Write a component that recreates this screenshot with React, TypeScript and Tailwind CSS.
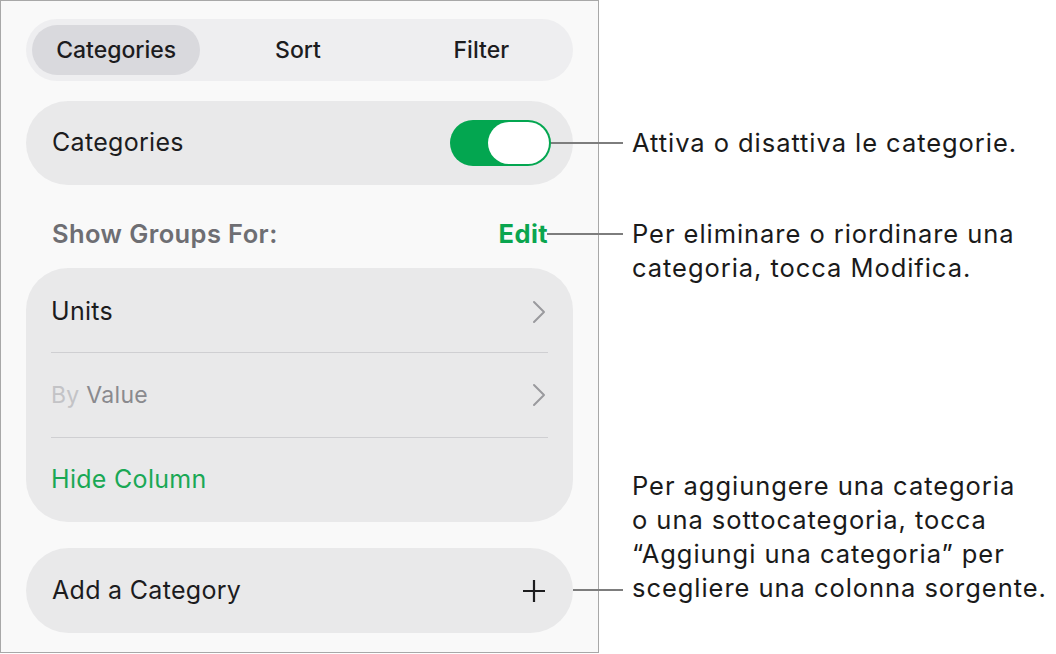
import React from "react";

const font = { fontFamily: "Inter, 'Noto Sans', sans-serif" };

function Chevron() {
  return (
    <svg width="14" height="24" viewBox="0 0 14 24" fill="none">
      <path d="M2 2 L12 12 L2 22" stroke="#9a9a9e" strokeWidth="2" strokeLinecap="round" strokeLinejoin="round" />
    </svg>
  );
}

function Plus() {
  return (
    <svg width="24" height="24" viewBox="0 0 24 24" fill="none">
      <path d="M12 1 V23 M1 12 H23" stroke="#1c1c1e" strokeWidth="2.2" />
    </svg>
  );
}

export default function App() {
  return (
    <div className="relative flex w-[1056px] h-[654px] bg-white text-[#1c1c1e]" style={font}>
      {/* Panel */}
      <div className="w-[599px] h-[653px] shrink-0 border border-[#a8a8a8] bg-[#f9f9f9] flex flex-col px-[25px] pt-[18px]">
        {/* Segmented */}
        <div className="h-[62px] rounded-full bg-[#eeeef0] flex items-center px-[6px]">
          <div className="w-[169px] h-[50px] rounded-full bg-[#d9d9dd] flex items-center justify-center text-[23px] font-medium">
            Categories
          </div>
          <div className="w-[196px] flex justify-center text-[23px] font-medium">Sort</div>
          <div className="w-[172px] flex justify-center text-[23px] font-medium">Filter</div>
        </div>

        {/* Categories toggle row */}
        <div className="mt-[20px] h-[84px] rounded-full bg-[#e9e9ea] flex items-center justify-between pl-[26px] pr-[22px] text-[25px] tracking-[0.3px]">
          <span>Categories</span>
          <div className="w-[101px] h-[46px] rounded-full bg-[#03a650] p-[2px] flex justify-end">
            <div className="w-[61px] h-[42px] rounded-full bg-white" />
          </div>
        </div>

        {/* Show groups for */}
        <div className="mt-[33px] h-[32px] flex items-center justify-between pl-[26px] pr-[25px] text-[25.5px] tracking-[0.4px]">
          <span className="font-semibold text-[#6e6e73]">Show Groups For:</span>
          <span className="font-bold text-[#0aa54f]">Edit</span>
        </div>

        {/* Group card */}
        <div className="mt-[18px] h-[254px] rounded-[42px] bg-[#e9e9ea] flex flex-col px-[25px] text-[25px] tracking-[0.3px]">
          <div className="h-[85px] flex items-center justify-between border-b border-[#cfcfd2] pt-[3px]">
            <span>Units</span>
            <span className="pr-[2px]"><Chevron /></span>
          </div>
          <div className="h-[85px] flex items-center justify-between border-b border-[#cfcfd2]">
            <span className="text-[23px]">
              <span className="text-[#c3c3c6]">By </span>
              <span className="text-[#8a8a8e]">Value</span>
            </span>
            <span className="pr-[2px]"><Chevron /></span>
          </div>
          <div className="flex-1 flex items-center">
            <span className="text-[#1aa855]">Hide Column</span>
          </div>
        </div>

        {/* Add a category */}
        <div className="mt-[26px] h-[85px] rounded-full bg-[#e9e9ea] flex items-center justify-between pl-[26px] pr-[27px] text-[25px] tracking-[0.3px]">
          <span>Add a Category</span>
          <Plus />
        </div>
      </div>

      {/* Annotations */}
      <div className="flex flex-col pl-[33px] text-[25.5px] tracking-[0.95px] leading-[34px] text-[#1a1a1a]">
        <p className="mt-[126px] whitespace-nowrap">Attiva o disattiva le categorie.</p>
        <p className="mt-[57px] whitespace-nowrap">
          Per eliminare o riordinare una
          <br />
          categoria, tocca Modifica.
        </p>
        <p className="mt-[184px] whitespace-nowrap">
          Per aggiungere una categoria
          <br />o una sottocategoria, tocca
          <br />“Aggiungi una categoria” per
          <br />scegliere una colonna sorgente.
        </p>
      </div>

      {/* Leader lines */}
      <div className="absolute left-[551px] top-[142px] w-[72px] h-[2px] bg-[#7d7d7d]" />
      <div className="absolute left-[547px] top-[233px] w-[76px] h-[2px] bg-[#7d7d7d]" />
      <div className="absolute left-[573px] top-[589px] w-[50px] h-[2px] bg-[#7d7d7d]" />
    </div>
  );
}
